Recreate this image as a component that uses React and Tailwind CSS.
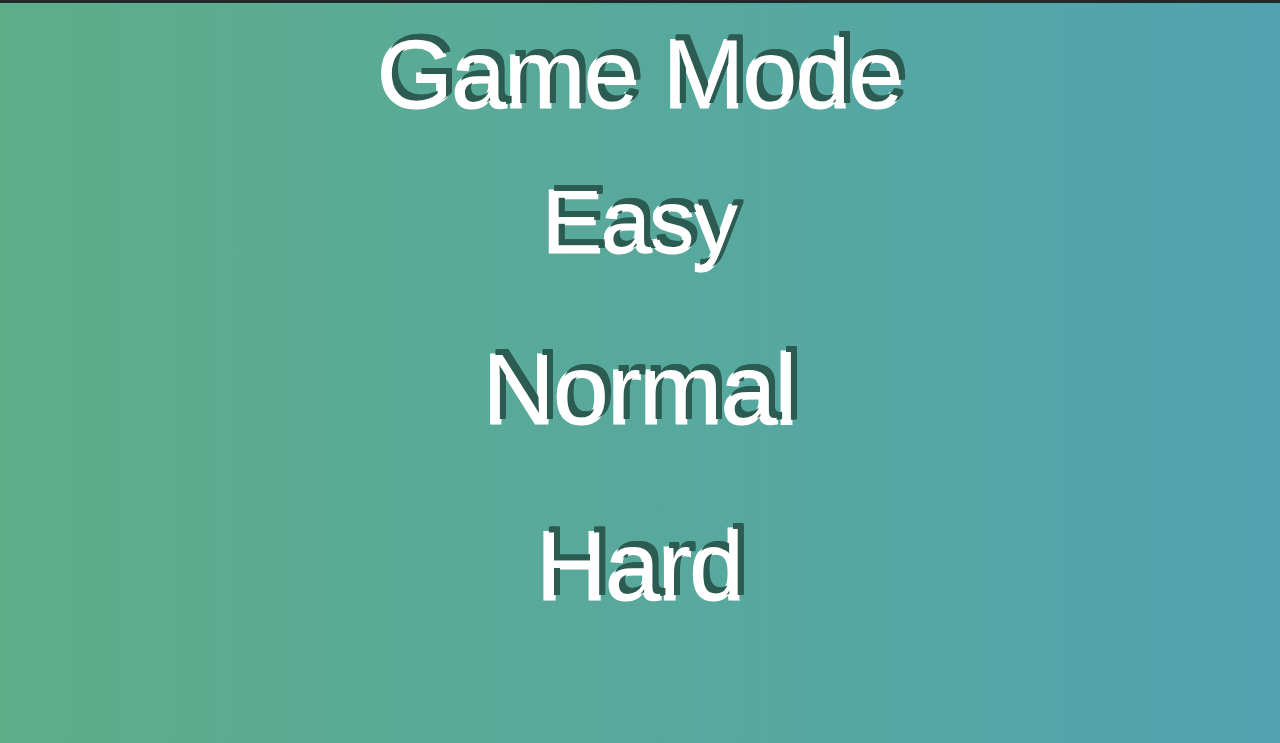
const shadow =
  "[text-shadow:5px_-5px_0_#2c5b52,6px_-4px_0_#2c5b52,4px_-6px_0_#2c5b52,6px_-6px_0_#2c5b52,4px_-4px_0_#2c5b52] [-webkit-text-stroke:3px_white] [paint-order:stroke_fill]";

function ModeButton({ label, className }) {
  return (
    <button
      type="button"
      className={`block leading-none text-white ${shadow} ${className}`}
    >
      {label}
    </button>
  );
}

export default function App() {
  return (
    <div className="flex h-[743px] w-full flex-col overflow-hidden font-['Liberation_Sans',Arial,sans-serif]">
      <div className="h-[3px] w-full bg-[#23292b]" />
      <main className="flex flex-1 flex-col items-center bg-gradient-to-r from-[#5dad89] via-[#58a99c] to-[#51a3b0]">
        <h1 className={`mt-[22px] text-[97px] leading-none text-white ${shadow} -tracking-[1px]`}>
          Game Mode
        </h1>
        <ModeButton label="Easy" className="mt-[55px] text-[89px] -tracking-[1px]" />
        <ModeButton label="Normal" className="mt-[73px] text-[99px] -tracking-[1px]" />
        <ModeButton label="Hard" className="mt-[79px] text-[97px] -tracking-[1px]" />
      </main>
    </div>
  );
}
